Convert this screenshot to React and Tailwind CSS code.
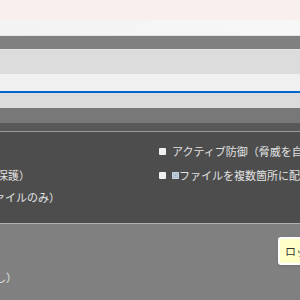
import React from "react"

const jp = { fontFamily: '"Noto Sans CJK JP", "Noto Sans", sans-serif' }

function Check({ children, icon }) {
  return (
    <div className="flex items-center gap-[6px] whitespace-nowrap">
      <span className="w-[7px] h-[7px] bg-[#f0f0f0] rounded-[1px] shrink-0" />
      {icon && (
        <svg width="7" height="7" viewBox="0 0 7 7" className="shrink-0 -mr-[6px]">
          <rect x="0.5" y="0.5" width="6" height="6" fill="#8fa8c0" stroke="#c8d4e0" />
          <path d="M2 2h3v3h-3z" fill="none" stroke="#e8eef4" strokeWidth="0.8" />
        </svg>
      )}
      <span>{children}</span>
    </div>
  )
}

export default function App() {
  return (
    <div className="w-[300px] h-[300px] overflow-hidden flex flex-col bg-[#808080]" style={jp}>
      <div className="h-[20px] bg-[#f9f0ed]" />
      <div className="h-[15px] bg-gradient-to-r from-[#f3f3f3] to-[#f7f7f7]" />
      <div className="h-[1px] bg-[#e4e4e4]" />
      <div className="h-[13px] bg-[#808080]" />
      <div className="h-[1px] bg-[#e6e6e6]" />
      <div className="h-[24px] bg-[#dcdcdc]" />
      <div className="h-[19px] bg-[#f0f0f0] border-b-2 border-[#0066cc]" />
      <div className="h-[15px] bg-[#dcdcdc]" />
      <div className="h-[15px] bg-[#787878]" />
      <div className="h-[8px] bg-[#585858]" />
      <div className="h-[1px] bg-[#9a9a9a]" />
      <div className="h-[91px] bg-[#4d4d4d] text-[#e2e2e2] text-[11px] leading-none relative">
        <div className="absolute left-[159px] top-[14px] flex flex-col gap-[13px]">
          <Check>アクティブ防御（脅威を自動ブロック）</Check>
          <Check icon>ファイルを複数箇所に配置</Check>
        </div>
        <div className="absolute right-[270px] top-[38px] whitespace-nowrap">（重要ファイルを保護）</div>
        <div className="absolute right-[240px] top-[60px] whitespace-nowrap">（対象ファイルのみ）</div>
      </div>
      <div className="h-[1px] bg-[#b0b0b0]" />
      <div className="flex-1 bg-[#808080] relative text-[11px] leading-none">
        <div className="absolute right-[283px] top-[48px] text-[#e2e2e2] whitespace-nowrap">（通知なし）</div>
        <div className="absolute left-[278px] top-[13px] h-[28px] pl-[5px] pr-2 flex items-center bg-[#ffffc8] border-2 border-white rounded-[3px] shadow-sm text-[#333] whitespace-nowrap">
          ロック中
        </div>
      </div>
    </div>
  )
}
